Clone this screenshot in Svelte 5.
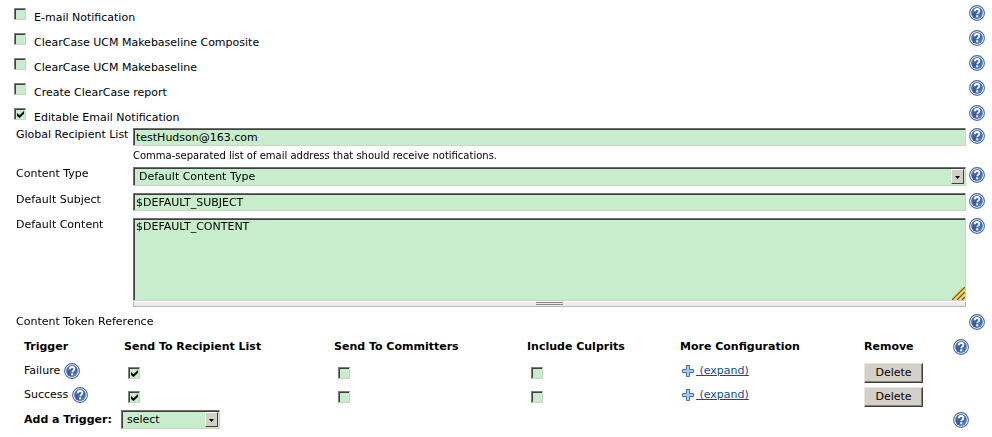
<script lang="ts">
  import { onMount } from 'svelte'

  let publishers = $state([
    { id: 'mailer', name: 'E-mail Notification', enabled: false },
    { id: 'ucm-composite', name: 'ClearCase UCM Makebaseline Composite', enabled: false },
    { id: 'ucm', name: 'ClearCase UCM Makebaseline', enabled: false },
    { id: 'report', name: 'Create ClearCase report', enabled: false },
    { id: 'ext-email', name: 'Editable Email Notification', enabled: true }
  ])

  let triggers = $state([
    { name: 'Failure', recipients: true, committers: false, culprits: false },
    { name: 'Success', recipients: true, committers: false, culprits: false }
  ])

  let recipients = $state('testHudson@163.com')
  let subject = $state('$DEFAULT_SUBJECT')
  let content = $state('$DEFAULT_CONTENT')

  let recipientInput: HTMLInputElement

  onMount(() => {
    recipientInput.focus()
    recipientInput.setSelectionRange(recipients.length, recipients.length)
  })

  function removeTrigger(name: string) {
    triggers = triggers.filter((t) => t.name !== name)
  }
</script>

{#snippet help(topic: string)}
  <a class="help" href="#help" aria-label="Help for {topic}">
    <svg width="16" height="16" viewBox="0 0 16 16" aria-hidden="true">
      <defs>
        <linearGradient id="help-fill" x1="0" y1="0" x2="1" y2="1">
          <stop offset="0" stop-color="#5d82ba" />
          <stop offset="0.5" stop-color="#335c9e" />
          <stop offset="1" stop-color="#6a92c8" />
        </linearGradient>
      </defs>
      <circle cx="8" cy="8" r="7.4" fill="#fff" stroke="#49699f" stroke-width="1.1" />
      <circle cx="8" cy="8" r="5.9" fill="url(#help-fill)" />
      <path d="M5.8 6.3C5.9 4.7 6.8 4 8.1 4c1.4 0 2.3.8 2.3 1.9 0 1.7-2.2 1.7-2.2 3.4" fill="none" stroke="#fff" stroke-width="1.8" />
      <rect x="7.2" y="10.3" width="2" height="2" fill="#fff" />
    </svg>
  </a>
{/snippet}

<form class="config" onsubmit={(e) => e.preventDefault()}>
  {#each publishers as publisher (publisher.id)}
    <div class="publisher">
      <input type="checkbox" id={publisher.id} bind:checked={publisher.enabled} />
      <label for={publisher.id}>{publisher.name}</label>
      {@render help(publisher.name)}
    </div>
  {/each}

  <div class="settings">
    <div class="row">
      <label for="recipients">Global Recipient List</label>
      <div class="field">
        <input type="text" id="recipients" bind:this={recipientInput} bind:value={recipients} />
        <p class="description">Comma-separated list of email address that should receive notifications.</p>
      </div>
      {@render help('Global Recipient List')}
    </div>

    <div class="row">
      <label for="content-type">Content Type</label>
      <span class="select">
        <select id="content-type">
          <option>Default Content Type</option>
        </select>
      </span>
      {@render help('Content Type')}
    </div>

    <div class="row">
      <label for="subject">Default Subject</label>
      <input type="text" id="subject" bind:value={subject} />
      {@render help('Default Subject')}
    </div>

    <div class="row">
      <label for="content">Default Content</label>
      <div class="field">
        <div class="editor">
          <textarea id="content" bind:value={content}></textarea>
          <svg class="grip" width="13" height="13" viewBox="0 0 13 13" aria-hidden="true">
            <path d="M0 13L13 0M5 13L13 5M10 13L13 10" stroke="#f6cf4e" stroke-width="3" />
            <path d="M0 13L13 0M5 13L13 5M10 13L13 10" stroke="#7a4f10" stroke-width="1.2" />
          </svg>
        </div>
        <div class="handle"></div>
      </div>
      {@render help('Default Content')}
    </div>

    <div class="row tokens">
      <span>Content Token Reference</span>
      {@render help('Content Token Reference')}
    </div>
  </div>

  <div class="triggers">
    <table>
      <colgroup>
        <col class="c-trigger" />
        <col class="c-list" />
        <col class="c-committers" />
        <col class="c-culprits" />
        <col class="c-more" />
        <col class="c-remove" />
        <col class="c-help" />
      </colgroup>
      <thead>
        <tr>
          <th scope="col">Trigger</th>
          <th scope="col">Send To Recipient List</th>
          <th scope="col">Send To Committers</th>
          <th scope="col">Include Culprits</th>
          <th scope="col">More Configuration</th>
          <th scope="col">Remove</th>
          <td>{@render help('triggers')}</td>
        </tr>
      </thead>
      <tbody>
        {#each triggers as trigger (trigger.name)}
          <tr>
            <td>
              <span class="name">{trigger.name} {@render help(trigger.name)}</span>
            </td>
            <td class="check">
              <input type="checkbox" aria-label="{trigger.name}: send to recipient list" bind:checked={trigger.recipients} />
            </td>
            <td class="check">
              <input type="checkbox" aria-label="{trigger.name}: send to committers" bind:checked={trigger.committers} />
            </td>
            <td class="check">
              <input type="checkbox" aria-label="{trigger.name}: include culprits" bind:checked={trigger.culprits} />
            </td>
            <td>
              <a class="expand" href="#expand">
                <svg width="12" height="12" viewBox="0 0 12 12" aria-hidden="true">
                  <path d="M4.5.5h3v4h4v3h-4v4h-3v-4h-4v-3h4z" fill="#a9cdf2" stroke="#4272b4" />
                </svg>
                <span>&nbsp;(expand)</span>
              </a>
            </td>
            <td class="remove">
              <button type="button" onclick={() => removeTrigger(trigger.name)}>Delete</button>
            </td>
            <td></td>
          </tr>
        {/each}
      </tbody>
    </table>

    <div class="add">
      <label for="add-trigger">Add a Trigger:</label>
      <span class="select">
        <select id="add-trigger">
          <option>select</option>
        </select>
      </span>
      {@render help('Add a Trigger')}
    </div>
  </div>
</form>

<style>
  :global(body) {
    margin: 0;
    background: #fff;
  }

  .config {
    padding: 0 7px 8px 14px;
    font: 11px/16px Verdana, 'DejaVu Sans', sans-serif;
    color: #000;
  }

  .help {
    display: block;
    width: 16px;
    height: 16px;
  }

  .help svg {
    display: block;
  }

  input,
  select,
  textarea,
  button {
    box-sizing: border-box;
    margin: 0;
    font: inherit;
    color: inherit;
    border-radius: 0;
  }

  input[type='text'],
  select,
  textarea {
    display: block;
    width: 100%;
    background: #c7edcc;
    border: 1px solid;
    border-color: #707070 #d4d0c8 #d4d0c8 #707070;
    box-shadow: inset 1px 1px #404040;
    outline: none;
  }

  input[type='text'] {
    height: 18px;
    padding: 0 2px;
  }

  input[type='checkbox'] {
    appearance: none;
    display: block;
    width: 12px;
    height: 12px;
    background: #c7edcc;
    border: 1px solid;
    border-color: #808080 #d4d0c8 #d4d0c8 #808080;
    box-shadow: inset 1px 1px #404040;
  }

  input[type='checkbox']:checked::before {
    content: '';
    display: block;
    width: 7px;
    height: 7px;
    margin: 2px;
    background: #000;
    clip-path: polygon(0 29%, 36% 62%, 100% 0, 100% 40%, 36% 100%, 0 70%);
  }

  .publisher {
    display: grid;
    grid-template-columns: 20px 1fr 16px;
    align-items: start;
    height: 20px;
    padding-top: 5px;
  }

  .publisher input {
    margin-top: 3px;
  }

  .publisher label {
    padding-top: 5px;
  }

  .settings {
    display: grid;
    gap: 7px;
    padding: 3px 0 0 2px;
  }

  .row {
    display: grid;
    grid-template-columns: 117px 1fr 19px;
    align-items: start;
  }

  .row > label {
    line-height: 14px;
    white-space: nowrap;
  }

  .row .help {
    justify-self: end;
  }

  .description {
    margin: 0;
    padding-top: 6px;
    font-size: 10px;
    line-height: 8px;
  }

  .select {
    position: relative;
    display: block;
  }

  .select select {
    appearance: none;
    height: 19px;
    padding: 0 20px 0 5px;
  }

  .select::before {
    content: '';
    position: absolute;
    top: 2px;
    right: 2px;
    bottom: 2px;
    box-sizing: border-box;
    width: 13px;
    background: #d4d0c8;
    border: 1px solid;
    border-color: #fff #404040 #404040 #fff;
    pointer-events: none;
  }

  .select::after {
    content: '';
    position: absolute;
    top: 9px;
    right: 6px;
    width: 5px;
    height: 3px;
    background: #000;
    clip-path: polygon(0 0, 100% 0, 50% 100%);
    pointer-events: none;
  }

  .editor {
    position: relative;
  }

  textarea {
    height: 83px;
    padding: 0 2px;
    resize: none;
  }

  .grip {
    position: absolute;
    right: 1px;
    bottom: 1px;
  }

  .handle {
    height: 4px;
    margin-top: 1px;
    border: 1px solid #b8b8b8;
    border-width: 0 1px 1px;
    background: #ececec;
  }

  .handle::before {
    content: '';
    display: block;
    width: 27px;
    height: 1px;
    margin: 0 auto;
    border: 1px solid #888;
    border-width: 1px 0;
  }

  .tokens {
    grid-template-columns: 1fr 19px;
  }

  .triggers {
    padding: 5px 16px 0 10px;
  }

  table {
    width: 100%;
    table-layout: fixed;
    border-collapse: collapse;
  }

  .c-trigger {
    width: 100px;
  }

  .c-list {
    width: 210px;
  }

  .c-committers {
    width: 193px;
  }

  .c-culprits {
    width: 153px;
  }

  .c-more {
    width: 184px;
  }

  .c-remove {
    width: 89px;
  }

  .c-help {
    width: 16px;
  }

  th,
  td {
    height: 24px;
    padding: 0;
    text-align: left;
    vertical-align: middle;
    white-space: nowrap;
  }

  .name,
  .expand {
    display: flex;
    align-items: center;
  }

  .name {
    gap: 4px;
  }

  .check input {
    margin: 4px 0 0 4px;
  }

  .expand {
    padding-left: 2px;
    gap: 2px;
    color: #204a87;
    text-decoration: none;
  }

  .expand span {
    text-decoration: underline;
  }

  .remove {
    vertical-align: bottom;
  }

  button {
    display: block;
    width: 59px;
    height: 20px;
    padding: 0;
    background: #d4d0c8;
    border: 1px solid;
    border-color: #e8e6e0 #404040 #404040 #e8e6e0;
    box-shadow: inset -1px -1px #808080;
  }

  .add {
    display: grid;
    grid-template-columns: 97px 99px 1fr;
    align-items: center;
    padding-top: 3px;
  }

  .add label {
    font-weight: bold;
    white-space: nowrap;
  }

  .add .help {
    justify-self: end;
  }
</style>
